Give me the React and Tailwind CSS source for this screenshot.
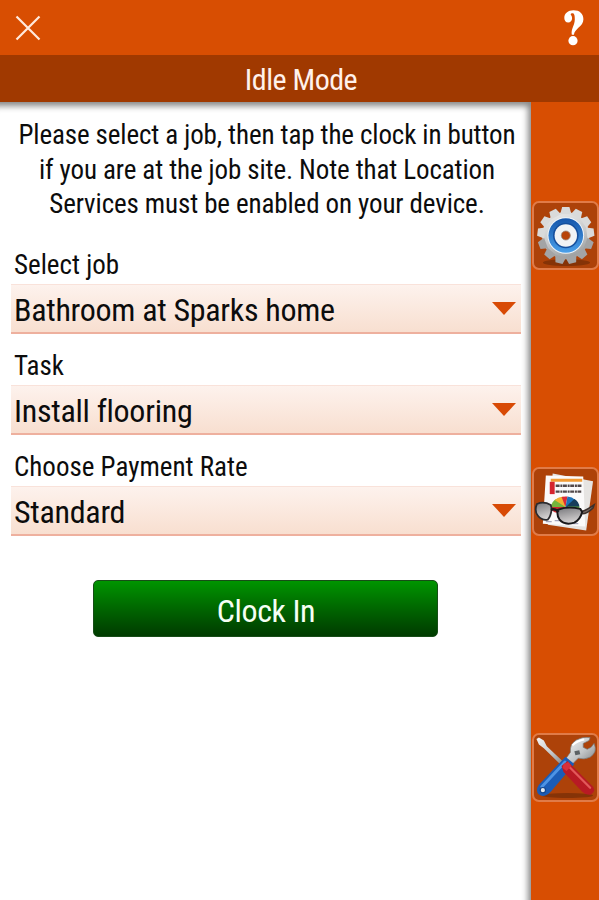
const fields = [
  { label: "Select job", value: "Bathroom at Sparks home" },
  { label: "Task", value: "Install flooring" },
  { label: "Choose Payment Rate", value: "Standard" },
]

const teeth = Array.from({ length: 13 }, (_, i) => (i * 360) / 13)

function CloseIcon() {
  return (
    <svg width="26" height="26" viewBox="0 0 26 26" className="text-[#ffeade]">
      <path d="M1.5 1.5 24.5 24.5M24.5 1.5 1.5 24.5" stroke="currentColor" strokeWidth="2.2" fill="none" />
    </svg>
  )
}

function HelpIcon() {
  return (
    <svg width="20" height="36" viewBox="0 0 20 36" fill="#fff">
      <path d="M7.8 24.8C6.8 18.500 10.6 15.6 10.8 9.4 10.9 5 10.1 3.2 8.4 3.2 7.2 3.2 6.5 3.8 6.7 4.6 6.9 5.400 8.1 6 8.1 8.3 8.1 10.8 6.4 12.500 4.2 12.500 1.800 12.500.3 10.6.3 8 .3 3.500 4 .3 9.500.3 15.6.3 19.4 3.7 19.4 9.2 19.4 16.6 10.600 18.2 9.9 24.800Z" />
      <circle cx="9" cy="30.7" r="4.600" />
    </svg>
  )
}

function GearIcon() {
  return (
    <svg width="64" height="66" viewBox="0 0 64 66">
      <defs>
        <linearGradient id="gearMetal" gradientUnits="userSpaceOnUse" x1="20" y1="4" x2="40" y2="62">
          <stop offset="0" stopColor="#f0f0f0" />
          <stop offset="0.5" stopColor="#c9cbcc" />
          <stop offset="1" stopColor="#8f9192" />
        </linearGradient>
        <linearGradient id="gearBlue" x1="0" y1="0" x2="0" y2="1">
          <stop offset="0" stopColor="#1555aa" />
          <stop offset="1" stopColor="#4aa0ea" />
        </linearGradient>
      </defs>
      <ellipse cx="33" cy="60" rx="24" ry="3.5" fill="#6b2a06" opacity="0.6" />
      <circle cx="32.3" cy="32.5" r="24" fill="url(#gearMetal)" />
      {teeth.map((angle) => (
        <path
          key={angle}
          d="M26.6 11 28.6 3.6H36L38 11Z"
          fill={angle > 100 && angle < 260 ? "#a3a4a5" : "#d9dada"}
          transform={`rotate(${angle} 32.3 32.5)`}
        />
      ))}
      <circle cx="32.3" cy="32.5" r="18.6" fill="#eef5fb" />
      <circle cx="32.3" cy="32.5" r="17.6" fill="url(#gearBlue)" />
      <circle cx="32.3" cy="32.5" r="13" fill="#154f9d" />
      <circle cx="32.3" cy="32.5" r="11.4" fill="#f1f3f5" />
      <circle cx="32.3" cy="32.5" r="4.6" fill="#b84309" stroke="#9c8c84" strokeWidth="0.8" />
    </svg>
  )
}

function ReportIcon() {
  return (
    <svg width="64" height="66" viewBox="0 0 64 66">
      <defs>
        <linearGradient id="lens" x1="0" y1="0" x2="0.3" y2="1">
          <stop offset="0" stopColor="#77777b" />
          <stop offset="1" stopColor="#d5d2d2" />
        </linearGradient>
      </defs>
      <path d="M19 4 60 12 53 62 14 56Z" fill="#e6e4e2" />
      <path d="M12 6 50 7 52 58 9 55Z" fill="#fbfafa" />
      <path d="M17 9.5H49V12.5H17Z" fill="#f29a32" />
      <path d="M16 12.5H21V25H16Z" fill="#d5242d" />
      <path d="M22 16.5H49M22 22.5H48" stroke="#51484a" strokeWidth="2.4" strokeDasharray="4 0.8 2 0.6" />
      <path d="M32 38 17 40Q17 32 24 29.5Z" fill="#74b43c" />
      <path d="M32 38 21 31Q25 28 30 27.5Z" fill="#f2b331" />
      <path d="M32 38 28 28Q31 27 34 27.5Z" fill="#de2a37" />
      <path d="M32 38 34 27.5Q39 28 42 31Z" fill="#1d72b8" />
      <path d="M32 38 41 30Q46 33 46 38Z" fill="#163d5b" />
      <path d="M17 38H46Q45 42 40 44H23Q18 43 17 38Z" fill="#c9282e" />
      <path d="M34 37.5H46V40H36Z" fill="#58a441" />
      <path d="M12 53H18M21 52H29M32 55H45" stroke="#8e91ad" strokeWidth="1" />
      <path d="M48 43Q54 41 61 36L60 39Q54 45 49 45" fill="#776b66" stroke="#3a302c" strokeWidth="1.6" />
      <path d="M3 35Q10 32 17 36L18 40Q17 48 14 51 8 52 4 47 0 42 3 35Z" fill="url(#lens)" stroke="#2b2b2f" strokeWidth="1.8" />
      <path d="M24 41Q34 37 47 40L49 43Q47 51 41 54 31 57 26 51 23 47 24 41Z" fill="url(#lens)" stroke="#18181b" strokeWidth="2" />
      <path d="M17 41Q21 39 25 43" fill="none" stroke="#18181b" strokeWidth="2.5" />
    </svg>
  )
}

function ToolsIcon() {
  return (
    <svg width="64" height="66" viewBox="0 0 64 66">
      <defs>
        <linearGradient id="toolSteel" x1="0" y1="0" x2="1" y2="1">
          <stop offset="0" stopColor="#f4f5f6" />
          <stop offset="0.55" stopColor="#c3c6c8" />
          <stop offset="1" stopColor="#7d8082" />
        </linearGradient>
      </defs>
      <ellipse cx="34" cy="61" rx="26" ry="2.5" fill="#6b2a06" opacity="0.6" />
      <path d="M2.5 3.5 5 2 10 5 13 11 31 28 28.500 31 10 13 5 9Z" fill="url(#toolSteel)" />
      <path
        d="M39 29 32 24 37 17Q36 9 43 4.500 49 1 57 2L56 5 50 8 50 12 54 14 58 12 61 8Q65 17 57 22 51 25 45 23Z"
        fill="url(#toolSteel)"
        stroke="#777"
        strokeWidth="0.7"
      />
      <path d="M39 10Q44 5 51 4" stroke="#fff" strokeWidth="2" fill="none" />
      <path d="M41 16 46 15 47 19 42 20Z" fill="#5c6164" />
      <path d="M32 21.500 41 29 17 57Q10 64 5 60 1 56 5 50Z" fill="#1b5cb6" />
      <path d="M31.500 27 8 52" stroke="#4d93e4" strokeWidth="3" strokeLinecap="round" />
      <circle cx="9" cy="55.500" r="2.700" fill="#e3e9ef" stroke="#12458c" strokeWidth="1.2" />
      <path d="M28 31 34 26 41 33 60 52Q63 57 58 60 53 61 49 57L30 37Z" fill="#b81a24" />
      <path d="M36 32 57 53" stroke="#e2585a" strokeWidth="2.3" strokeLinecap="round" />
      <path d="M30 29 35 27 38 31 33 36 29 33Z" fill="#d6303c" />
    </svg>
  )
}

function TileButton({ label, children }) {
  return (
    <button
      aria-label={label}
      className="flex h-[69px] w-[67px] items-center justify-center rounded-[7px] border-2 border-[#e07b48] bg-[#ad4209]"
    >
      {children}
    </button>
  )
}

function SelectField({ label, value }) {
  return (
    <div className="h-[101px]">
      <div className="h-[37px] pt-px pl-[3px] text-[27px] leading-[35px]">{label}</div>
      <button className="flex h-[50px] w-full items-center justify-between border-t border-b-2 border-t-[#f9e2da] border-b-[#eeb09e] bg-linear-to-b from-[#fdf2ed] to-[#f8dfd0] pr-[5px] pl-[3px] text-[32px] leading-[44px] tracking-[-0.28px]">
        <span className="pt-[3px] whitespace-nowrap">{value}</span>
        <svg width="24" height="13" viewBox="0 0 24 13">
          <path d="M0 0H24L12 13Z" fill="#d84a05" />
        </svg>
      </button>
    </div>
  )
}

export default function App() {
  return (
    <div className="flex h-[900px] w-[599px] flex-col overflow-hidden bg-white font-['Roboto_Condensed',Roboto,sans-serif] text-[#0c0c0c]">
      <header className="flex h-[55px] shrink-0 items-center justify-between bg-[#d84e02] px-[15px]">
        <button aria-label="Close">
          <CloseIcon />
        </button>
        <button aria-label="Help">
          <HelpIcon />
        </button>
      </header>

      <div className="h-[47px] shrink-0 bg-[#a03900] pl-[3px] text-center text-[30px] leading-[50px] tracking-[-0.5px] text-[#fff1eb]">
        Idle Mode
      </div>

      <div className="flex min-h-0 flex-1">
        <main className="w-[531px] pl-[11px] pr-[10px] pt-[15px] shadow-[inset_-5px_6px_6px_-2px_#888]">
          <p className="h-[130px] pt-px pl-[2px] text-center text-[27px] leading-[34.5px] tracking-[-0.11px] whitespace-nowrap">
            Please select a job, then tap the clock in button
            <br />
            if you are at the job site. Note that Location
            <br />
            Services must be enabled on your device.
          </p>

          {fields.map((field) => (
            <SelectField key={field.label} label={field.label} value={field.value} />
          ))}

          <button className="mt-[30px] ml-[82px] block h-[57px] w-[345px] rounded-[5px] border border-[#174d17] bg-linear-to-b from-[#009500] to-[#003b00] pt-[5px] pl-px text-[32px] leading-[50px] tracking-[-0.4px] text-[#f6fff4]">
            Clock In
          </button>
        </main>

        <aside className="flex w-[68px] flex-col items-center gap-[197px] bg-[#d84e02] pt-[99px]">
          <TileButton label="Settings">
            <GearIcon />
          </TileButton>
          <TileButton label="Reports">
            <ReportIcon />
          </TileButton>
          <TileButton label="Tools">
            <ToolsIcon />
          </TileButton>
        </aside>
      </div>
    </div>
  )
}
